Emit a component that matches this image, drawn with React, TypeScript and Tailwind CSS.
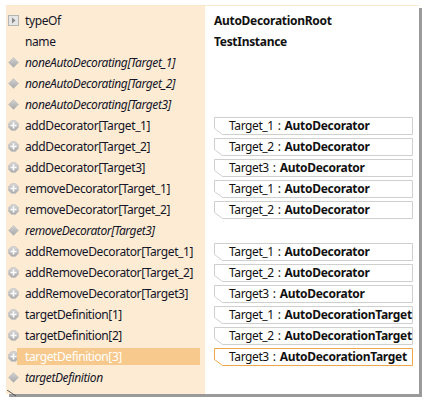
import React from "react";

type Row = {
  name: string;
  italic?: boolean;
  icon: "type" | "none" | "diamond" | "plus";
  value?: { kind: "text"; text: string } | { kind: "box"; id: string; type: string; selected?: boolean };
  selected?: boolean;
};

const rows: Row[] = [
  { name: "typeOf", icon: "type", value: { kind: "text", text: "AutoDecorationRoot" } },
  { name: "name", icon: "none", value: { kind: "text", text: "TestInstance" } },
  { name: "noneAutoDecorating[Target_1]", italic: true, icon: "diamond" },
  { name: "noneAutoDecorating[Target_2]", italic: true, icon: "diamond" },
  { name: "noneAutoDecorating[Target3]", italic: true, icon: "diamond" },
  { name: "addDecorator[Target_1]", icon: "plus", value: { kind: "box", id: "Target_1", type: "AutoDecorator" } },
  { name: "addDecorator[Target_2]", icon: "plus", value: { kind: "box", id: "Target_2", type: "AutoDecorator" } },
  { name: "addDecorator[Target3]", icon: "plus", value: { kind: "box", id: "Target3", type: "AutoDecorator" } },
  { name: "removeDecorator[Target_1]", icon: "plus", value: { kind: "box", id: "Target_1", type: "AutoDecorator" } },
  { name: "removeDecorator[Target_2]", icon: "plus", value: { kind: "box", id: "Target_2", type: "AutoDecorator" } },
  { name: "removeDecorator[Target3]", italic: true, icon: "diamond" },
  { name: "addRemoveDecorator[Target_1]", icon: "plus", value: { kind: "box", id: "Target_1", type: "AutoDecorator" } },
  { name: "addRemoveDecorator[Target_2]", icon: "plus", value: { kind: "box", id: "Target_2", type: "AutoDecorator" } },
  { name: "addRemoveDecorator[Target3]", icon: "plus", value: { kind: "box", id: "Target3", type: "AutoDecorator" } },
  { name: "targetDefinition[1]", icon: "plus", value: { kind: "box", id: "Target_1", type: "AutoDecorationTarget" } },
  { name: "targetDefinition[2]", icon: "plus", value: { kind: "box", id: "Target_2", type: "AutoDecorationTarget" } },
  { name: "targetDefinition[3]", icon: "plus", selected: true, value: { kind: "box", id: "Target3", type: "AutoDecorationTarget", selected: true } },
  { name: "targetDefinition", italic: true, icon: "diamond" },
];

function Icon({ kind }: { kind: Row["icon"] }) {
  if (kind === "none") return <span className="w-[11px] h-[11px]" />;
  if (kind === "type")
    return (
      <svg width="11" height="11" viewBox="0 0 11 11">
        <rect x="0.5" y="0.5" width="10" height="10" fill="#e6e6e6" stroke="#b4b4b4" />
        <path d="M4 2.5 L7.5 5.5 L4 8.5 Z" fill="#8a8a8a" />
      </svg>
    );
  if (kind === "diamond")
    return (
      <svg width="11" height="11" viewBox="0 0 11 11">
        <defs>
          <linearGradient id="dg" x1="0" y1="0" x2="0" y2="1">
            <stop offset="0" stopColor="#d2d2d2" />
            <stop offset="1" stopColor="#a8a8a8" />
          </linearGradient>
        </defs>
        <path d="M5.5 0.5 L10.5 5.5 L5.5 10.5 L0.5 5.5 Z" fill="url(#dg)" stroke="#bdbdbd" strokeWidth="0.6" />
      </svg>
    );
  return (
    <svg width="11" height="11" viewBox="0 0 11 11">
      <defs>
        <linearGradient id="pg" x1="0" y1="0" x2="0" y2="1">
          <stop offset="0" stopColor="#d6d6d6" />
          <stop offset="1" stopColor="#ababab" />
        </linearGradient>
      </defs>
      <path d="M3.5 0.5 L7.5 0.5 L10.5 3.5 L10.5 7.5 L7.5 10.5 L3.5 10.5 L0.5 7.5 L0.5 3.5 Z" fill="url(#pg)" stroke="#c4c4c4" strokeWidth="0.6" />
      <path d="M5.5 2.5 V8.5 M2.5 5.5 H8.5" stroke="#ffffff" strokeWidth="1.6" />
    </svg>
  );
}

function ValueBox({ id, type, selected }: { id: string; type: string; selected?: boolean }) {
  const stroke = selected ? "#eea64a" : "#cfcfcf";
  return (
    <div className="relative w-[199px] h-[18px] flex items-center pl-[15px] whitespace-nowrap">
      <svg className="absolute inset-0" width="199" height="18" viewBox="0 0 199 18">
        <path d="M0.5 0.5 H198.5 V17.5 H8.5 L0.5 11.5 Z" fill="#ffffff" stroke={stroke} strokeWidth="1" />
      </svg>
      <span className="relative text-[#111]">
        {id}
        <span className="mx-[4px]">:</span>
        <span className="font-bold tracking-[-0.3px]">{type}</span>
      </span>
    </div>
  );
}

export default function App() {
  return (
    <div
      className="w-[426px] h-[402px] bg-white pt-[5px] pl-[6px]"
      style={{ fontFamily: '"Noto Sans", "Open Sans", sans-serif' }}
    >
      <div className="relative w-[413px] h-[389px] border-t border-[#fbe9cf] shadow-[3px_3px_0_#9a9a9a] flex text-[12px] tracking-[-0.4px] leading-none text-[#141428]">
        <div className="w-[199px] bg-[#fdecd3] pt-[4px]">
          {rows.map((r, i) => (
            <div key={i} className="h-[21px] flex items-center">
              <div className="w-[11px] ml-[2px] flex items-center justify-center">
                <Icon kind={r.icon} />
              </div>
              <div
                className={
                  "ml-[-2px] pl-[8px] h-[17px] flex items-center w-[183px] whitespace-nowrap " +
                  (r.selected ? "bg-[#f7c98d] text-white" : "") +
                  (r.italic ? " italic" : "")
                }
              >
                {r.name}
              </div>
            </div>
          ))}
        </div>
        <div className="flex-1 bg-white pt-[4px] pl-[9px]">
          {rows.map((r, i) => (
            <div key={i} className="h-[21px] flex items-center">
              {r.value?.kind === "text" && <span className="font-bold text-[#111] tracking-[-0.3px]">{r.value.text}</span>}
              {r.value?.kind === "box" && (
                <ValueBox id={r.value.id} type={r.value.type} selected={r.value.selected} />
              )}
            </div>
          ))}
        </div>
        <svg className="absolute left-0 bottom-[-4px]" width="14" height="8" viewBox="0 0 14 8">
          <path d="M1 0 L10 6" stroke="#555" strokeWidth="1" />
        </svg>
      </div>
    </div>
  );
}
